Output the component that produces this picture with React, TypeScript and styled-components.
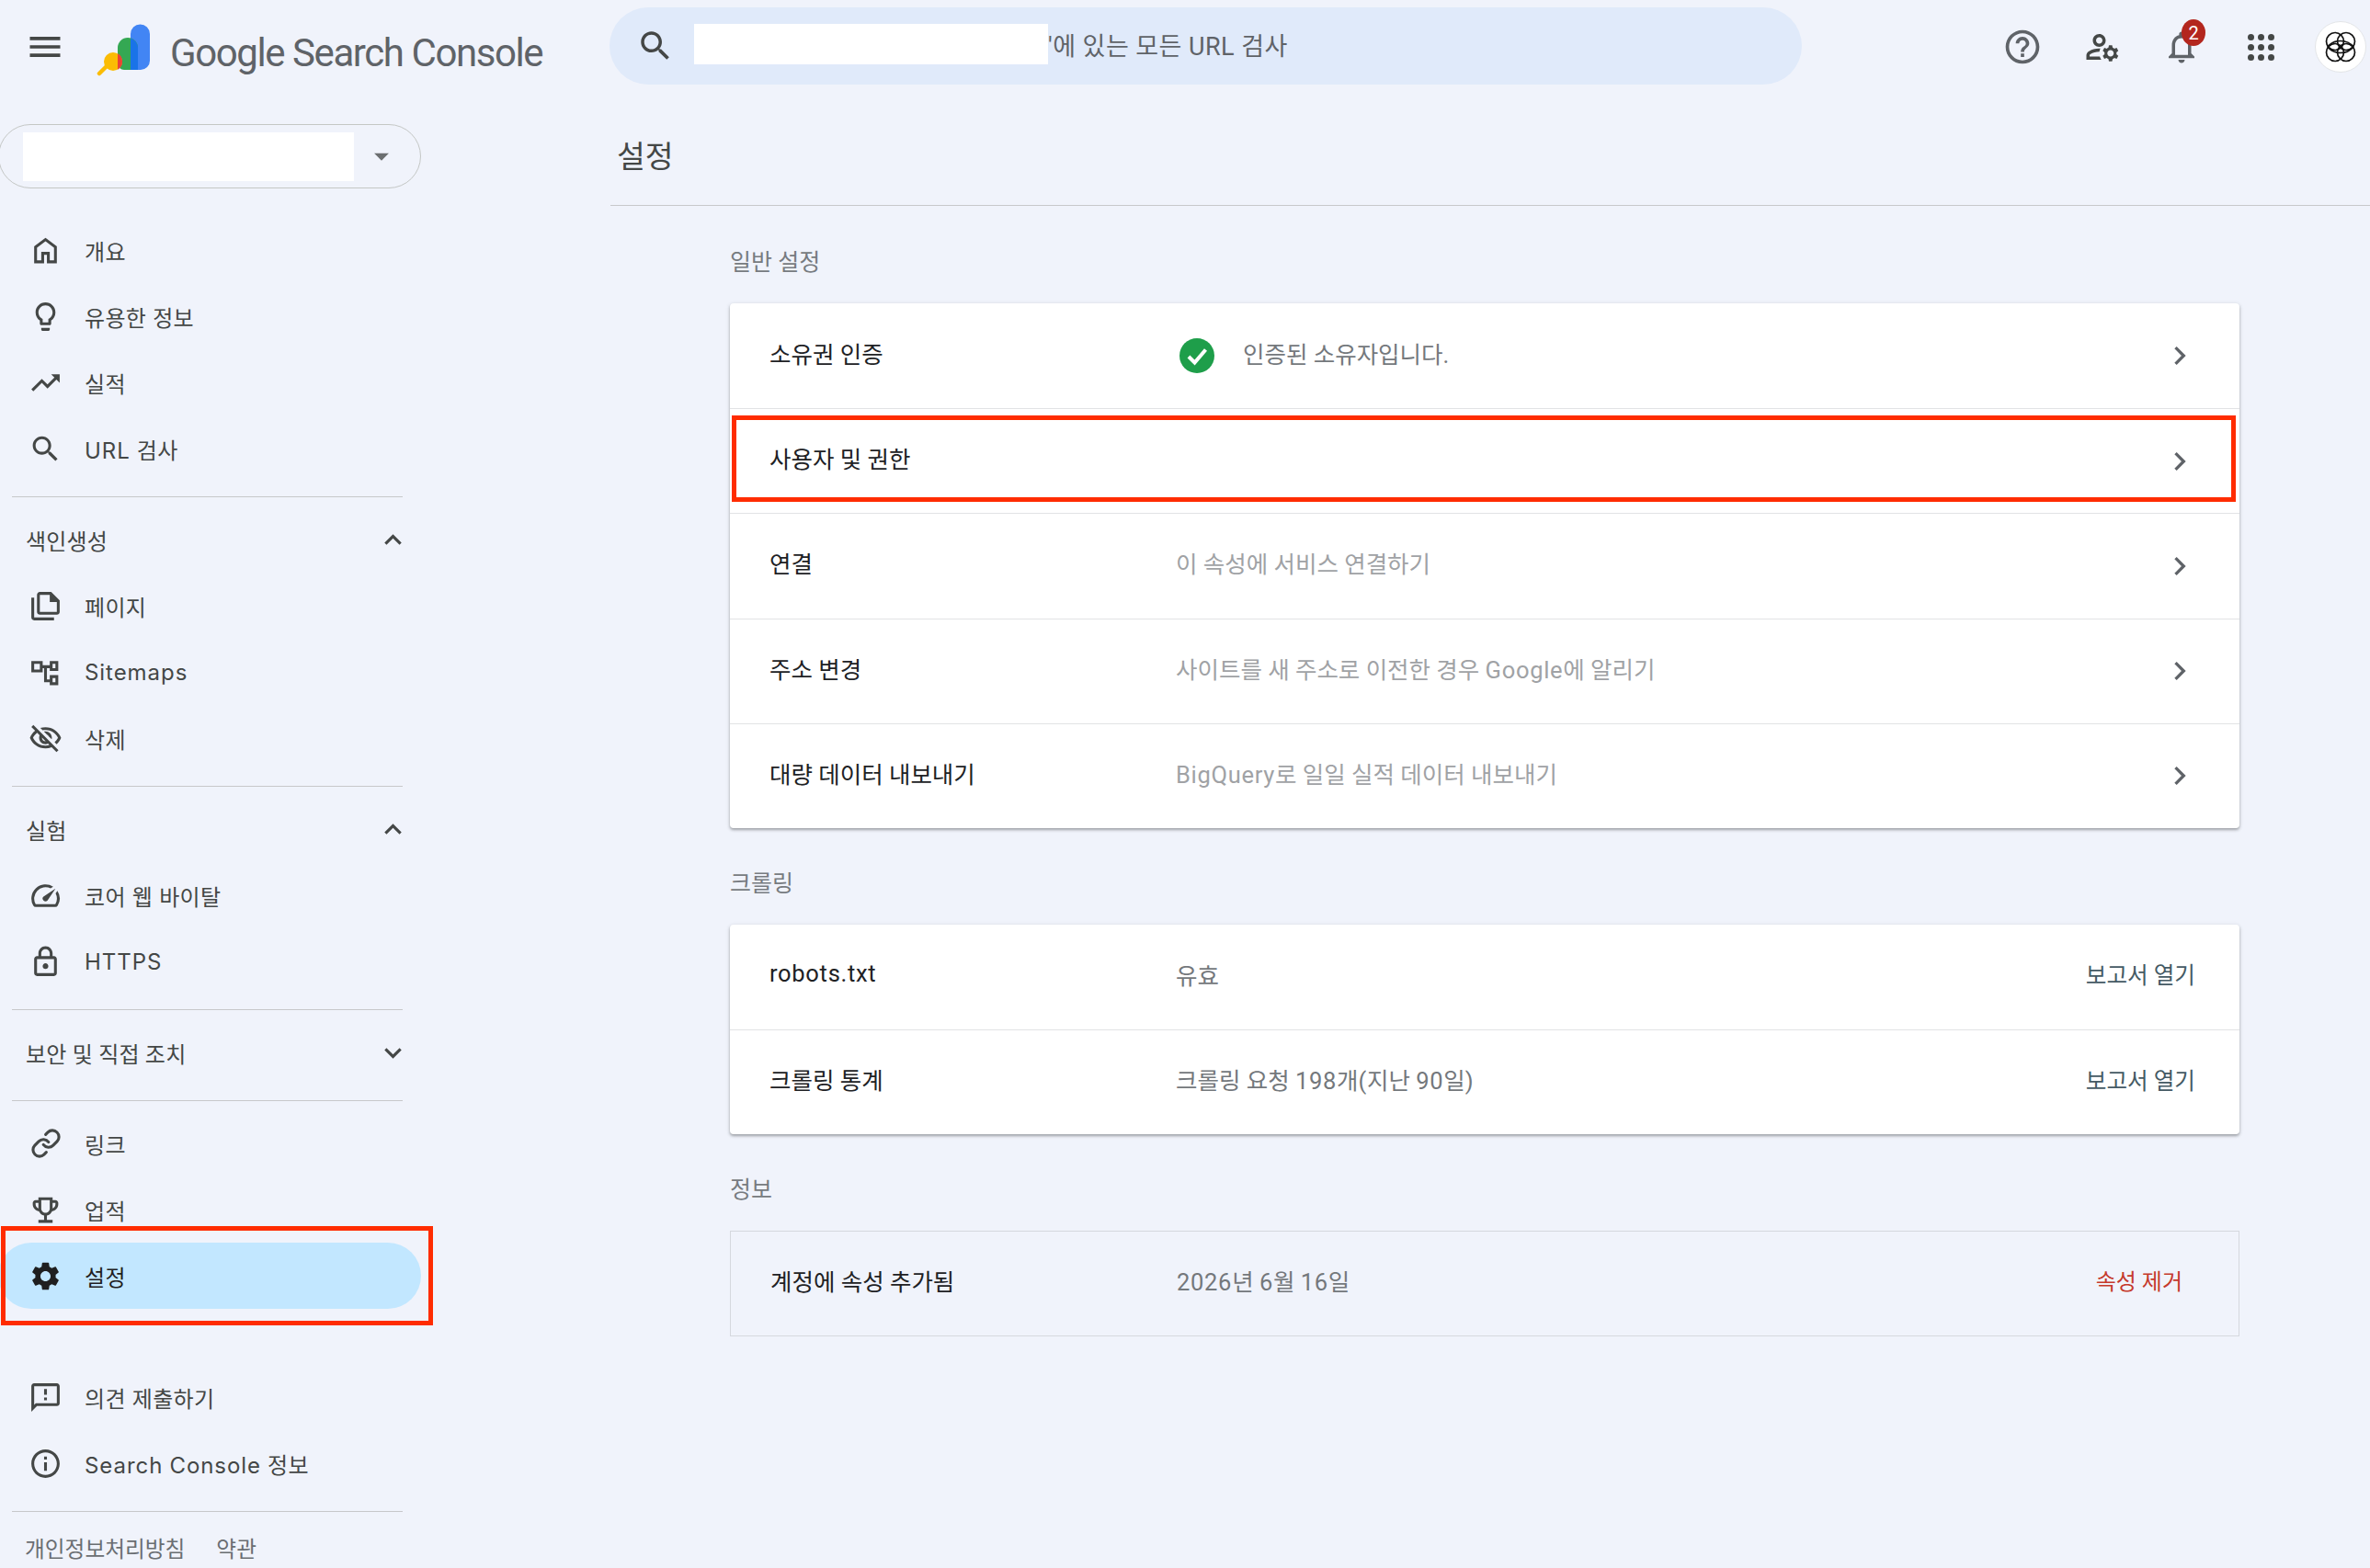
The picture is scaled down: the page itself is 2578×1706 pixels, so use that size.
import React from "react"
import styled, { createGlobalStyle } from "styled-components"

const GlobalStyle = createGlobalStyle`
  html, body {
    margin: 0;
    height: 100%;
    overflow: hidden;
    background: #f0f3fb;
    font-family: Roboto, "Noto Sans CJK KR", sans-serif;
  }
`

const PATHS = {
  menu: "M3 18h18v-2H3v2zm0-5h18v-2H3v2zm0-7v2h18V6H3z",
  home: "M6 19h3v-6h6v6h3v-9l-6-4.5L6 10v9zm-2 2V9l8-6 8 6v12h-7v-6h-2v6H4z",
  bulb: "M9 21c0 .55.45 1 1 1h4c.55 0 1-.45 1-1v-1H9v1zm3-19C8.14 2 5 5.14 5 9c0 2.38 1.19 4.47 3 5.74V17c0 .55.45 1 1 1h6c.55 0 1-.45 1-1v-2.26c1.81-1.27 3-3.36 3-5.74 0-3.86-3.14-7-7-7zm2.85 11.1l-.85.6V16h-4v-2.3l-.85-.6C7.8 12.16 7 10.63 7 9c0-2.76 2.24-5 5-5s5 2.24 5 5c0 1.63-.8 3.16-2.15 4.1z",
  trending: "M16 6l2.29 2.29-4.88 4.88-4-4L2 16.59 3.41 18l6-6 4 4 6.3-6.29L22 12V6z",
  search: "M15.5 14h-.79l-.28-.27C15.41 12.59 16 11.11 16 9.5 16 5.91 13.09 3 9.5 3S3 5.91 3 9.5 5.91 16 9.5 16c1.61 0 3.09-.59 4.23-1.57l.27.28v.79l5 4.99L20.49 19l-4.99-5zm-6 0C7.01 14 5 11.99 5 9.5S7.01 5 9.5 5 14 7.01 14 9.5 11.99 14 9.5 14z",
  less: "M12 8l-6 6 1.41 1.41L12 10.83l4.59 4.58L18 14z",
  more: "M16.59 8.59L12 13.17 7.41 8.59 6 10l6 6 6-6z",
  pages: "M4 6H2v14c0 1.1.9 2 2 2h14v-2H4V6zm12-4H8c-1.1 0-2 .9-2 2v12c0 1.1.9 2 2 2h12c1.1 0 2-.9 2-2V8l-6-6zm4 14H8V4h7v5h5v7z",
  sitemap: "M2 4h8v8H2V4zm2 2v4h4V6H4zM15 4h6v7h-6V4zm2 2v3h2V6h-2zM15 14h6v7h-6v-7zm2 2v3h2v-3h-2zM10 7h5v2h-2v8h2v2h-4V9h-1V7z",
  eyeOff: "M12 6c3.79 0 7.17 2.13 8.82 5.5-.59 1.22-1.42 2.27-2.41 3.12l1.41 1.41c1.39-1.23 2.49-2.77 3.18-4.53C21.27 7.11 17 4 12 4c-1.27 0-2.49.2-3.64.57l1.65 1.65C10.66 6.09 11.32 6 12 6zm-1.07 1.14L13 9.21c.57.25 1.03.71 1.28 1.28l2.07 2.07c.08-.34.14-.7.14-1.07C16.5 9.01 14.48 7 12 7c-.37 0-.72.05-1.07.14zM2.01 3.87l2.68 2.68C3.06 7.83 1.77 9.53 1 11.5 2.73 15.89 7 19 12 19c1.52 0 2.98-.29 4.32-.82l3.42 3.42 1.41-1.41L3.42 2.45 2.01 3.87zm7.5 7.5l2.61 2.61c-.04.01-.08.02-.12.02-1.38 0-2.5-1.12-2.5-2.5 0-.05.01-.08.01-.13zm-3.4-3.4l1.75 1.75c-.23.55-.36 1.15-.36 1.78 0 2.48 2.02 4.5 4.5 4.5.63 0 1.23-.13 1.77-.36l.98.98c-.88.24-1.8.38-2.75.38-3.79 0-7.17-2.13-8.82-5.5.7-1.43 1.72-2.61 2.93-3.53z",
  speed: "M20.38 8.57l-1.23 1.85a8 8 0 0 1-.22 7.58H5.07A8 8 0 0 1 15.58 6.85l1.85-1.23A10 10 0 0 0 3.35 19a2 2 0 0 0 1.72 1h13.85a2 2 0 0 0 1.74-1 10 10 0 0 0-.27-10.44zm-9.79 6.84a2 2 0 0 0 2.83 0l5.66-8.49-8.49 5.66a2 2 0 0 0 0 2.83z",
  lock: "M18 8h-1V6c0-2.76-2.24-5-5-5S7 3.24 7 6v2H6c-1.1 0-2 .9-2 2v10c0 1.1.9 2 2 2h12c1.1 0 2-.9 2-2V10c0-1.1-.9-2-2-2zM9 6c0-1.66 1.34-3 3-3s3 1.34 3 3v2H9V6zm9 14H6V10h12v10zm-6-3c1.1 0 2-.9 2-2s-.9-2-2-2-2 .9-2 2 .9 2 2 2z",
  trophy: "M19 5h-2V3H7v2H5c-1.1 0-2 .9-2 2v1c0 2.55 1.92 4.63 4.39 4.94.63 1.5 1.98 2.63 3.61 2.96V19H7v2h10v-2h-4v-3.1c1.63-.33 2.98-1.46 3.61-2.96C19.08 12.63 21 10.55 21 8V7c0-1.1-.9-2-2-2zM5 8V7h2v3.82C5.84 10.4 5 9.3 5 8zm7 6c-1.65 0-3-1.35-3-3V5h6v6c0 1.65-1.35 3-3 3zm7-6c0 1.3-.84 2.4-2 2.82V7h2v1z",
  gear: "M19.14 12.94c.04-.3.06-.61.06-.94 0-.32-.02-.64-.07-.94l2.03-1.58c.18-.14.23-.41.12-.61l-1.92-3.32c-.12-.22-.37-.29-.59-.22l-2.39.96c-.5-.38-1.03-.7-1.62-.94l-.36-2.54c-.04-.24-.24-.41-.48-.41h-3.84c-.24 0-.43.17-.47.41l-.36 2.54c-.59.24-1.13.57-1.62.94l-2.39-.96c-.22-.08-.47 0-.59.22L2.74 8.87c-.12.21-.08.47.12.61l2.03 1.58c-.05.3-.09.63-.09.94s.02.64.07.94l-2.03 1.58c-.18.14-.23.41-.12.61l1.92 3.32c.12.22.37.29.59.22l2.39-.96c.5.38 1.03.7 1.62.94l.36 2.54c.05.24.24.41.48.41h3.84c.24 0 .44-.17.47-.41l.36-2.54c.59-.24 1.13-.56 1.62-.94l2.39.96c.22.08.47 0 .59-.22l1.92-3.32c.12-.22.07-.47-.12-.61l-2.01-1.58zM12 15.6c-1.98 0-3.6-1.62-3.6-3.6s1.62-3.6 3.6-3.6 3.6 1.62 3.6 3.6-1.62 3.6-3.6 3.6z",
  feedback: "M20 2H4c-1.1 0-1.99.9-1.99 2L2 22l4-4h14c1.1 0 2-.9 2-2V4c0-1.1-.9-2-2-2zm0 14H5.17L4 17.17V4h16v12zm-9-4h2v2h-2zm0-6h2v4h-2z",
  info: "M11 7h2v2h-2zm0 4h2v6h-2zm1-9C6.48 2 2 6.48 2 12s4.48 10 10 10 10-4.48 10-10S17.52 2 12 2zm0 18c-4.41 0-8-3.59-8-8s3.59-8 8-8 8 3.59 8 8-3.59 8-8 8z",
  help: "M11 18h2v-2h-2v2zm1-16C6.48 2 2 6.48 2 12s4.48 10 10 10 10-4.48 10-10S17.52 2 12 2zm0 18c-4.41 0-8-3.59-8-8s3.59-8 8-8 8 3.59 8 8-3.59 8-8 8zm0-14c-2.21 0-4 1.79-4 4h2c0-1.1.9-2 2-2s2 .9 2 2c0 2-3 1.75-3 5h2c0-2.25 3-2.5 3-5 0-2.21-1.79-4-4-4z",
  manage: "M4 18v-.65c0-.34.16-.66.41-.81C6.1 15.53 8.03 15 10 15c.03 0 .05 0 .08.01.1-.7.3-1.37.59-1.98-.22-.02-.44-.03-.67-.03-2.42 0-4.68.67-6.61 1.82-.88.52-1.39 1.5-1.39 2.53V20h9.26c-.42-.6-.75-1.28-.97-2H4zM10 12c2.21 0 4-1.79 4-4s-1.79-4-4-4-4 1.79-4 4 1.79 4 4 4zm0-6c1.1 0 2 .9 2 2s-.9 2-2 2-2-.9-2-2 .9-2 2-2zM20.75 16c0-.22-.03-.42-.06-.63l1.14-1.01-1-1.73-1.45.49c-.32-.27-.68-.48-1.08-.63L18 11h-2l-.3 1.49c-.4.15-.76.36-1.08.63l-1.45-.49-1 1.73 1.14 1.01c-.03.21-.06.41-.06.63s.03.42.06.63l-1.14 1.01 1 1.73 1.45-.49c.32.27.68.48 1.08.63L16 21h2l.3-1.49c.4-.15.76-.36 1.08-.63l1.45.49 1-1.73-1.14-1.01c.03-.21.06-.41.06-.63zM17 18c-1.1 0-2-.9-2-2s.9-2 2-2 2 .9 2 2-.9 2-2 2z",
  bell: "M12 22c1.1 0 2-.9 2-2h-4c0 1.1.9 2 2 2zm6-6v-5c0-3.07-1.63-5.64-4.5-6.32V4c0-.83-.67-1.5-1.5-1.5s-1.5.67-1.5 1.5v.68C7.64 5.36 6 7.92 6 11v5l-2 2v1h16v-1l-2-2zm-2 1H8v-6c0-2.48 1.51-4.5 4-4.5s4 2.02 4 4.5v6z",
  chevron: "M10 6L8.59 7.41 13.17 12l-4.58 4.59L10 18l6-6z",
  dropdown: "M7 10l5 5 5-5z",
}

type IconName = keyof typeof PATHS

const Svg = styled.svg<{ $size: number; $color?: string }>`
  width: ${props => props.$size}px;
  height: ${props => props.$size}px;
  flex: none;
  display: block;
  fill: ${props => props.$color || "#444746"};
`

const Icon: React.FC<{ name: IconName; size?: number; color?: string }> = ({ name, size = 37, color }) => (
  <Svg viewBox="0 0 24 24" $size={size} $color={color}>
    <path d={PATHS[name]} />
  </Svg>
)

const ChainSvg = styled.svg`
  width: 34px;
  height: 34px;
  margin: 0 1.5px;
  flex: none;
  display: block;
  fill: none;
  stroke: #444746;
  stroke-width: 2.2;
  stroke-linecap: round;
`

const ChainIcon = () => (
  <ChainSvg viewBox="0 0 24 24">
    <path d="M10 13a5 5 0 0 0 7.54.54l3-3a5 5 0 0 0-7.07-7.07l-1.72 1.71" />
    <path d="M14 11a5 5 0 0 0-7.54-.54l-3 3a5 5 0 0 0 7.07 7.07l1.71-1.71" />
  </ChainSvg>
)

// latin runs sit wider than the hangul in the reference, so they get their own tracking
const Latin = styled.span<{ $track: number }>`
  letter-spacing: ${props => props.$track}px;
`

const tracked = (text: string, track: number) =>
  text.split(/([A-Za-z0-9.()]+)/).map((part, i) =>
    i % 2 ? (
      <Latin key={i} $track={track}>
        {part}
      </Latin>
    ) : (
      part
    ),
  )

const Page = styled.div`
  width: 2578px;
  height: 1706px;
  overflow: hidden;
  color: #444746;
`

const TopBar = styled.header`
  height: 102px;
  display: flex;
  align-items: flex-start;
`

const Brand = styled.div`
  width: 663px;
  height: 102px;
  flex: none;
  display: flex;
  align-items: center;
  padding-left: 27px;
  box-sizing: border-box;
`

const LogoMark = styled.svg`
  width: 62px;
  height: 60px;
  flex: none;
  margin: 10px 0 0 34px;
`

const Wordmark = styled.span`
  margin: 12px 0 0 18px;
  font-size: 42px;
  letter-spacing: -1.42px;
  color: #5f6368;
  white-space: nowrap;
`

const SearchBar = styled.div`
  width: 1297px;
  height: 84px;
  margin-top: 8px;
  flex: none;
  border-radius: 42px;
  background: #e0eafa;
  display: flex;
  align-items: center;
  padding-left: 29px;
  box-sizing: border-box;
  overflow: hidden;
`

const SearchMask = styled.div`
  width: 385px;
  height: 44px;
  margin: 0 0 5px 21px;
  background: #fff;
  flex: none;
`

const SearchText = styled.span`
  margin-bottom: 3px;
  font-size: 27px;
  letter-spacing: 0.45px;
  color: #5f6368;
  white-space: nowrap;
`

const TopActions = styled.div`
  flex: 1;
  height: 102px;
  display: flex;
  align-items: center;
  justify-content: flex-end;
  gap: 26.5px;
  padding-right: 2px;
`

const ActionSlot = styled.div`
  width: 60px;
  height: 102px;
  display: flex;
  align-items: center;
  justify-content: center;
  position: relative;
`

const Badge = styled.span`
  position: absolute;
  left: 30px;
  top: 21px;
  width: 26px;
  height: 29px;
  border-radius: 50%;
  background: #b3261e;
  color: #fff;
  font-size: 20px;
  display: flex;
  align-items: center;
  justify-content: center;
`

const DotsGrid = styled.div`
  display: grid;
  grid-template-columns: repeat(3, 7px);
  gap: 4px;
`

const Dot = styled.i`
  width: 7px;
  height: 7px;
  border-radius: 50%;
  background: #444746;
`

const Avatar = styled.div`
  width: 56px;
  height: 56px;
  border-radius: 50%;
  background: #fff;
  border: 1px solid #e3e5e8;
  box-sizing: border-box;
  display: flex;
  align-items: center;
  justify-content: center;
`

const Body = styled.div`
  display: flex;
  height: 1604px;
`

const Sidebar = styled.aside`
  width: 664px;
  flex: none;
  padding-top: 33px;
  box-sizing: border-box;
`

const PropertySelect = styled.div`
  width: 460px;
  height: 70px;
  margin: 0 0 31px -2px;
  box-sizing: border-box;
  border: 1px solid #c4c7c5;
  border-radius: 35px;
  display: flex;
  align-items: center;
  gap: 11px;
  padding-left: 26px;
`

const PropertyMask = styled.div`
  width: 360px;
  height: 53px;
  background: #fff;
`

const NavItem = styled.div<{ $active?: boolean }>`
  position: relative;
  width: ${props => (props.$active ? "460px" : "458px")};
  height: 72px;
  margin-left: ${props => (props.$active ? "-2px" : "0")};
  box-sizing: border-box;
  display: flex;
  align-items: center;
  gap: 24px;
  padding-left: ${props => (props.$active ? "33px" : "31px")};
  border-radius: 36px;
  background: ${props => (props.$active ? "#c2e7ff" : "transparent")};
  color: ${props => (props.$active ? "#1f1f1f" : "#444746")};
`

const NavLabel = styled.span`
  font-family: Inter, "Noto Sans CJK KR", sans-serif;
  font-size: 24px;
  letter-spacing: 0.3px;
  white-space: nowrap;
`

const NavGroupHeader = styled.div`
  width: 458px;
  height: 72px;
  box-sizing: border-box;
  display: flex;
  align-items: center;
  justify-content: space-between;
  padding: 0 12px 0 28px;
  font-size: 24px;
  letter-spacing: 0.2px;
`

const NavDivider = styled.hr`
  width: 425px;
  margin: 16px 0 10px 13px;
  border: 0;
  border-top: 1.5px solid #c7c8ca;
`

const NavSpacer = styled.div`
  height: 60px;
`

const FooterLinks = styled.div`
  display: flex;
  gap: 34px;
  margin-top: 22px;
  padding-left: 27px;
  font-size: 23.7px;
  color: #6a6e72;
  white-space: nowrap;
`

const Main = styled.main`
  flex: 1;
  min-width: 0;
`

const PageTitle = styled.h1`
  height: 122px;
  margin: 0;
  box-sizing: border-box;
  padding: 47px 0 0 7px;
  font-size: 33.5px;
  line-height: 44px;
  font-weight: 400;
  color: #444746;
  border-bottom: 1.5px solid #c7c8ca;
`

const Content = styled.div`
  width: 1642px;
  margin-left: 130px;
  padding-top: 39px;
`

const SectionLabel = styled.h2`
  margin: 0 0 27px;
  height: 40px;
  font-size: 25px;
  line-height: 46px;
  font-weight: 400;
  color: #777b80;
`

const Card = styled.section<{ $flat?: boolean }>`
  border-radius: ${props => (props.$flat ? "0" : "4px")};
  background: ${props => (props.$flat ? "transparent" : "#fff")};
  border: ${props => (props.$flat ? "1.5px solid #d5d8de" : "0")};
  box-shadow: ${props =>
    props.$flat ? "none" : "0 2px 3px rgba(60, 64, 67, 0.38), 0 1px 5px rgba(60, 64, 67, 0.14)"};
  margin-bottom: 38px;
`

const Row = styled.div<{ $flat?: boolean }>`
  position: relative;
  height: ${props => (props.$flat ? "112.5px" : "114.2px")};
  box-sizing: border-box;
  display: flex;
  align-items: center;
  padding: 0 48px 0 43px;
  & + & {
    border-top: 1.5px solid #e2e3e5;
  }
`

const RowTitle = styled.div`
  width: 442px;
  flex: none;
  padding-bottom: 8px;
  font-size: 25.5px;
  color: #202124;
  white-space: nowrap;
`

const RowValue = styled.div<{ $tone?: "muted" | "normal" }>`
  flex: 1;
  display: flex;
  align-items: center;
  gap: 31px;
  font-size: 25.5px;
  color: ${props => (props.$tone === "muted" ? "#a0a2a5" : "#74787c")};
  white-space: nowrap;
`

const ValueText = styled.span`
  padding-bottom: 8px;
`

const RowLink = styled.span`
  padding-bottom: 8px;
  font-size: 24.6px;
  color: #455a64;
  white-space: nowrap;
`

const DangerLink = styled.span`
  margin-right: 13px;
  padding-bottom: 8px;
  font-size: 24px;
  color: #c5392b;
  white-space: nowrap;
`

const CheckBadge = styled.svg`
  width: 38px;
  height: 38px;
  margin-left: 4px;
  flex: none;
`

const ChevronSlot = styled.div`
  margin-right: -3px;
`

const CalloutRow = styled.div`
  position: absolute;
  left: 2px;
  right: 4px;
  top: 7px;
  bottom: 12px;
  border: 5px solid #ff2c00;
`

const CalloutNav = styled.div`
  position: absolute;
  left: 3px;
  right: -13px;
  top: -18px;
  bottom: -18px;
  border: 5px solid #ff2c00;
`

const Logo = () => (
  <LogoMark viewBox="0 0 62 60">
    <path d="M37 11a10.500 10.500 0 0 1 21 0v29a10 10 0 0 1-10 10H37z" fill="#4285f4" />
    <path d="M23 26a11 11 0 0 1 22 0v24H30a7 7 0 0 1-7-7z" fill="#34a853" />
    <path d="M37 15.500a11 11 0 0 1 8 10.500v24h-8z" fill="#1a73e8" />
    <path d="M3 54l9-9" stroke="#fbbc04" strokeWidth="4.500" strokeLinecap="round" />
    <circle cx="18" cy="41" r="10" fill="#fbbc04" />
    <path d="M23 32.300a10 10 0 0 1 0 17.400z" fill="#ea4335" />
  </LogoMark>
)

const AvatarMark = () => (
  <svg viewBox="0 0 34 34" width="34" height="34" fill="none" stroke="#111" strokeWidth="1.700">
    <circle cx="11" cy="11" r="9.500" />
    <circle cx="23" cy="11" r="9.500" />
    <circle cx="11" cy="23" r="9.500" />
    <circle cx="23" cy="23" r="9.500" />
    <path d="M3 17c4-5 8-6.500 14-6.500S27 12 31 17c-4 5-8 6.500-14 6.500S7 22 3 17z" />
  </svg>
)

const NAV_TOP: [IconName, string][] = [
  ["home", "개요"],
  ["bulb", "유용한 정보"],
  ["trending", "실적"],
  ["search", "URL 검사"],
]

const NAV_INDEX: [IconName, string][] = [
  ["pages", "페이지"],
  ["sitemap", "Sitemaps"],
  ["eyeOff", "삭제"],
]

const NAV_EXPERIENCE: [IconName, string][] = [
  ["speed", "코어 웹 바이탈"],
  ["lock", "HTTPS"],
]

const NavLine: React.FC<{ icon: IconName; label: string }> = ({ icon, label }) => (
  <NavItem>
    <Icon name={icon} />
    <NavLabel>{tracked(label, 0.95)}</NavLabel>
  </NavItem>
)

const NavItems: React.FC<{ items: [IconName, string][] }> = ({ items }) => (
  <>
    {items.map(([icon, label]) => (
      <NavLine key={label} icon={icon} label={label} />
    ))}
  </>
)

const NavHeader: React.FC<{ label: string; open?: boolean }> = ({ label, open }) => (
  <NavGroupHeader>
    <span>{label}</span>
    <Icon name={open ? "less" : "more"} />
  </NavGroupHeader>
)

const RowChevron = () => (
  <ChevronSlot>
    <Icon name="chevron" size={40} color="#5f6368" />
  </ChevronSlot>
)

const InfoRow: React.FC<{ title: string; value?: string; muted?: boolean; flat?: boolean; children?: React.ReactNode }> = ({
  title,
  value,
  muted,
  flat,
  children,
}) => (
  <Row $flat={flat}>
    <RowTitle>{tracked(title, 0.7)}</RowTitle>
    <RowValue $tone={muted ? "muted" : "normal"}>
      {value && <ValueText>{tracked(value, 0.7)}</ValueText>}
    </RowValue>
    {children}
  </Row>
)

export default function App() {
  return (
    <Page>
      <GlobalStyle />
      <TopBar>
        <Brand>
          <Icon name="menu" size={44} />
          <Logo />
          <Wordmark>Google Search Console</Wordmark>
        </Brand>
        <SearchBar>
          <Icon name="search" size={42} />
          <SearchMask />
          <SearchText>'에 있는 모든 URL 검사</SearchText>
        </SearchBar>
        <TopActions>
          <ActionSlot>
            <Icon name="help" size={44} color="#5f6368" />
          </ActionSlot>
          <ActionSlot>
            <Icon name="manage" size={42} />
          </ActionSlot>
          <ActionSlot>
            <Icon name="bell" size={42} color="#5f6368" />
            <Badge>2</Badge>
          </ActionSlot>
          <ActionSlot>
            <DotsGrid>
              {Array.from({ length: 9 }, (_, i) => (
                <Dot key={i} />
              ))}
            </DotsGrid>
          </ActionSlot>
          <ActionSlot>
            <Avatar>
              <AvatarMark />
            </Avatar>
          </ActionSlot>
        </TopActions>
      </TopBar>
      <Body>
        <Sidebar>
          <PropertySelect>
            <PropertyMask />
            <Icon name="dropdown" size={38} color="#6b6e70" />
          </PropertySelect>
          <NavItems items={NAV_TOP} />
          <NavDivider />
          <NavHeader label="색인생성" open />
          <NavItems items={NAV_INDEX} />
          <NavDivider />
          <NavHeader label="실험" open />
          <NavItems items={NAV_EXPERIENCE} />
          <NavDivider />
          <NavHeader label="보안 및 직접 조치" />
          <NavDivider />
          <NavItem>
            <ChainIcon />
            <NavLabel>링크</NavLabel>
          </NavItem>
          <NavLine icon="trophy" label="업적" />
          <NavItem $active>
            <Icon name="gear" color="#1f1f1f" />
            <NavLabel>설정</NavLabel>
            <CalloutNav />
          </NavItem>
          <NavSpacer />
          <NavLine icon="feedback" label="의견 제출하기" />
          <NavLine icon="info" label="Search Console 정보" />
          <NavDivider />
          <FooterLinks>
            <span>개인정보처리방침</span>
            <span>약관</span>
          </FooterLinks>
        </Sidebar>
        <Main>
          <PageTitle>설정</PageTitle>
          <Content>
            <SectionLabel>일반 설정</SectionLabel>
            <Card>
              <Row>
                <RowTitle>소유권 인증</RowTitle>
                <RowValue>
                  <CheckBadge viewBox="0 0 38 38">
                    <circle cx="19" cy="19" r="19" fill="#1e9e4a" />
                    <path d="M10 20l6.500 6.500L28.500 12.500" fill="none" stroke="#fff" strokeWidth="4" />
                  </CheckBadge>
                  <ValueText>인증된 소유자입니다.</ValueText>
                </RowValue>
                <RowChevron />
              </Row>
              <Row>
                <RowTitle>사용자 및 권한</RowTitle>
                <RowValue />
                <RowChevron />
                <CalloutRow />
              </Row>
              <InfoRow title="연결" value="이 속성에 서비스 연결하기" muted>
                <RowChevron />
              </InfoRow>
              <InfoRow title="주소 변경" value="사이트를 새 주소로 이전한 경우 Google에 알리기" muted>
                <RowChevron />
              </InfoRow>
              <InfoRow title="대량 데이터 내보내기" value="BigQuery로 일일 실적 데이터 내보내기" muted>
                <RowChevron />
              </InfoRow>
            </Card>
            <SectionLabel>크롤링</SectionLabel>
            <Card>
              <InfoRow title="robots.txt" value="유효">
                <RowLink>보고서 열기</RowLink>
              </InfoRow>
              <InfoRow title="크롤링 통계" value="크롤링 요청 198개(지난 90일)">
                <RowLink>보고서 열기</RowLink>
              </InfoRow>
            </Card>
            <SectionLabel>정보</SectionLabel>
            <Card $flat>
              <InfoRow flat title="계정에 속성 추가됨" value="2026년 6월 16일">
                <DangerLink>속성 제거</DangerLink>
              </InfoRow>
            </Card>
          </Content>
        </Main>
      </Body>
    </Page>
  )
}
